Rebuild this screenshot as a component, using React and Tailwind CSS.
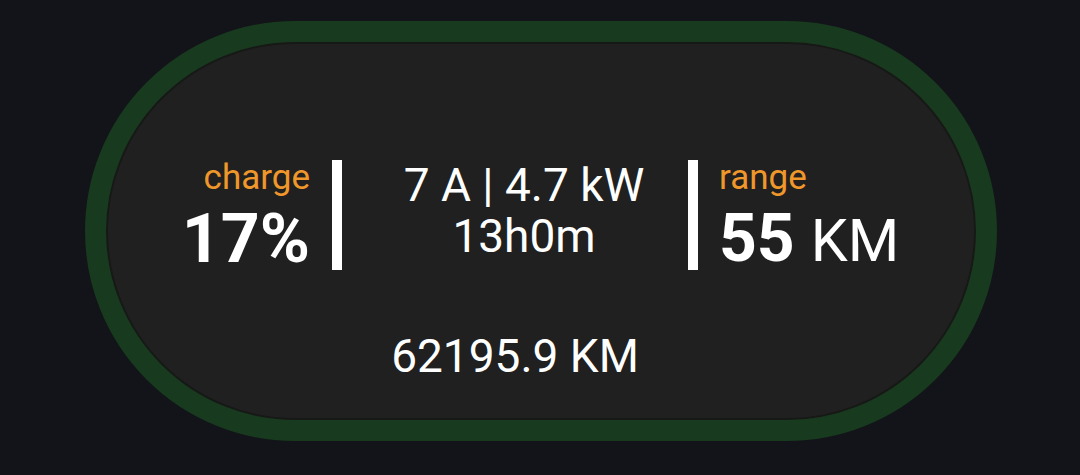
export default function App() {
  return (
    <div
      className="w-[1080px] h-[475px] bg-[#131419] pl-[85px] pt-[21px]"
      style={{ fontFamily: "Roboto, 'Liberation Sans', sans-serif" }}
    >
      <div className="w-[912px] h-[420px] rounded-full border-[21px] border-[#183a1e] bg-[#202020] shadow-[inset_0_0_0_2px_#161916]">
        <div className="flex flex-col items-start pt-[118px]">
          <div className="flex items-start">
            {/* charge */}
            <div className="w-[204px] flex flex-col items-end pt-[3px]">
              <span className="text-[35px] leading-[30px] text-[#ef972a]">charge</span>
              <span className="mt-[12px] text-[68px] leading-[68px] font-bold text-white">17%</span>
            </div>
            <div className="ml-[22px] w-[10px] h-[110px] bg-white" />
            {/* center */}
            <div className="w-[346px] flex flex-col items-center pl-[18px] text-white text-[46px] leading-[51px]">
              <span>7 A | 4.7 kW</span>
              <span>13h0m</span>
            </div>
            <div className="w-[10px] h-[110px] bg-white" />
            {/* range */}
            <div className="ml-[21px] flex flex-col items-start pt-[3px]">
              <span className="text-[35px] leading-[30px] text-[#ef972a]">range</span>
              <div className="mt-[13px] flex items-baseline text-white whitespace-nowrap">
                <span className="text-[66px] leading-[66px] font-bold">55</span>
                <span className="text-[59px] leading-[59px] ml-[16px]">KM</span>
              </div>
            </div>
          </div>
          <div className="ml-[236px] w-[346px] mt-[58px] flex justify-center text-white text-[46px] leading-[51px]">
            62195.9 KM
          </div>
        </div>
      </div>
    </div>
  );
}
